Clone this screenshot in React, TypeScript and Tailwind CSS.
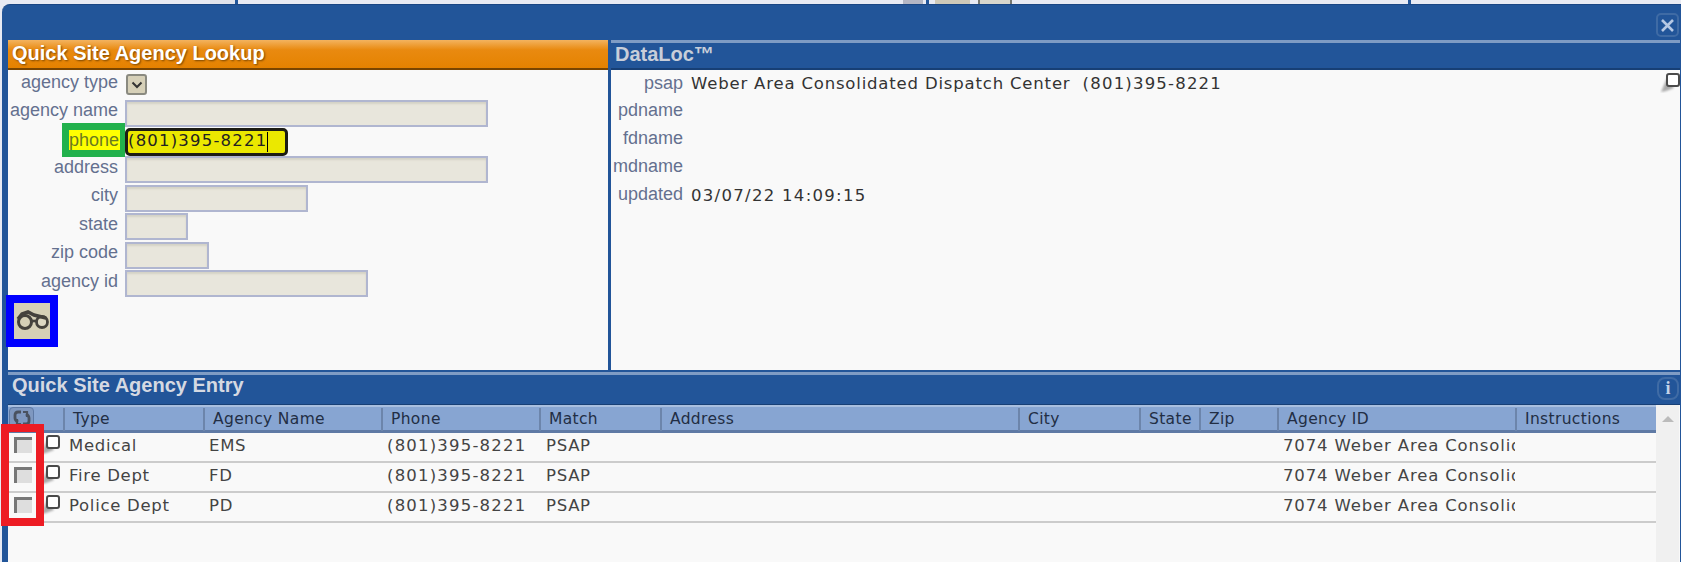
const COLS = "grid grid-cols-[55px_140px_178px_158px_121px_358px_121px_60px_78px_238px_141px]";

const HEADERS = ["Type", "Agency Name", "Phone", "Match", "Address", "City", "State", "Zip", "Agency ID", "Instructions"];

const ROWS = [
  { type: "Medical", name: "EMS" },
  { type: "Fire Dept", name: "FD" },
  { type: "Police Dept", name: "PD" },
];

const FIELDS = [
  { label: "agency name", width: "w-[363px]" },
  { label: "phone", width: "" },
  { label: "address", width: "w-[363px]" },
  { label: "city", width: "w-[183px]" },
  { label: "state", width: "w-[63px]" },
  { label: "zip code", width: "w-[84px]" },
  { label: "agency id", width: "w-[243px]" },
];

const DATALOC = ["pdname", "fdname", "mdname"];

function NoteIcon() {
  return (
    <svg width="20" height="20" viewBox="0 0 20 20" className="block">
      <filter id="note-blur">
        <feGaussianBlur stdDeviation="1.2" />
      </filter>
      <polygon points="7,5 1,19 6,18 14,15" fill="#aaa" filter="url(#note-blur)" />
      <rect x="7" y="1" width="12" height="12" rx="2" fill="#fff" stroke="#4a4a4a" strokeWidth="2" />
    </svg>
  );
}

function Binoculars() {
  return (
    <svg width="36" height="36" viewBox="0 0 36 36" fill="none" stroke="#45423c">
      <circle cx="11" cy="19" r="6.5" strokeWidth="3" fill="#d6d0b6" />
      <circle cx="28" cy="19" r="5.5" strokeWidth="2.8" fill="#ddd8c2" />
      <path d="M4 16 L8 11 L14 9 L20 12 L32 15" strokeWidth="3.6" />
      <path d="M17 18 L23 18" strokeWidth="2.6" />
    </svg>
  );
}

function RefreshIcon() {
  return (
    <svg width="20" height="18" viewBox="0 0 20 18" fill="none" stroke="#4a5260" strokeWidth="2.8">
      <path d="M9 3 H6 C4 3 3 4 3 6 V9 C3 11 4 12 6 13" />
      <path d="M5 10 L5 15 L9 15" strokeWidth="2.2" />
      <path d="M11 15 H14 C16 15 17 14 17 12 V9 C17 7 16 6 14 5" />
      <path d="M15 8 L15 3 L11 3" strokeWidth="2.2" />
    </svg>
  );
}

export default function App() {
  return (
    <div className="relative flex h-[562px] w-[1681px] flex-col overflow-hidden bg-[#e8eaf3] font-['Liberation_Sans',sans-serif]">
      {/* page behind the dialog */}
      <div className="flex h-[4px] shrink-0">
        <div className="ml-[210px] w-[25px] bg-[#e0e2ea]" />
        <div className="w-[3px] bg-[#225599]" />
        <div className="ml-[665px] w-[20px] bg-[#b4b6c4]" />
        <div className="ml-[3px] w-[3px] bg-[#225599]" />
        <div className="ml-[6px] w-[35px] bg-[#cfc9b8]" />
        <div className="ml-[8px] w-[34px] border-x-2 border-[#77776f] bg-[#d8d6cc]" />
        <div className="ml-[396px] w-[3px] bg-[#225599]" />
      </div>

      <div className="ml-[2px] flex min-h-0 flex-1 flex-col rounded-tl-[8px] border-t border-[#1a4684] bg-[#225599] pl-[6px] pr-[1px]">
        {/* title bar */}
        <div className="flex h-[35px] shrink-0 items-end justify-end pb-[3px] pr-[1px]">
          <span className="flex h-[24px] w-[23px] items-center justify-center rounded-[5px] border-2 border-[#3f6ba5]">
            <svg width="15" height="15" viewBox="0 0 15 15" stroke="#b6c8e4" strokeWidth="2.6">
              <path d="M2 2 L13 13 M13 2 L2 13" />
            </svg>
          </span>
        </div>

        {/* section headers */}
        <div className="flex h-[30px] shrink-0">
          <div className="flex w-[600px] items-center border-b-2 border-[#7a4500] bg-[linear-gradient(#f3b35f,#e98a10_35%,#e58200)] pb-[2px] pl-[4px] text-[20px] font-bold text-white [text-shadow:1px_1px_2px_#7a4500]">
            Quick Site Agency Lookup
          </div>
          <div className="ml-[3px] flex flex-1 items-center border-b-2 border-[#173f75] border-t-[3px] border-t-[#7f9cc4] bg-[#225599] pb-[3px] pl-[4px] text-[20px] font-bold text-[#c8ced9]">
            DataLoc™
          </div>
        </div>

        {/* lookup form and DataLoc */}
        <div className="flex h-[300px] shrink-0">
          <div className="w-[600px] bg-[#f9f9f9] text-[18px] text-[#64708f]">
            <div className="flex h-[29px] items-center">
              <span className="w-[110px] pb-[5px] text-right">agency type</span>
              <span className="ml-[8px] flex h-[21px] w-[21px] items-center justify-center rounded-[3px] border-2 border-[#8a8a80] bg-[#d6d0b8]">
                <svg width="12" height="8" viewBox="0 0 12 8" fill="none" stroke="#333" strokeWidth="2">
                  <path d="M1.5 1.5 L6 6 L10.5 1.5" />
                </svg>
              </span>
            </div>
            {FIELDS.map((f) =>
              f.label === "phone" ? (
                <div key={f.label} className="flex h-[28.4px] items-center">
                  <span className="ml-[54px] -my-[3px] flex h-[34px] w-[63px] -translate-y-[2px] items-center border-y-[7px] border-l-[7px] border-r-[5px] border-[#22b14c] bg-[#ffff00] text-[18px] leading-none text-[#6a7a20]">
                    phone
                  </span>
                  <div className="flex h-[28px] w-[163px] items-center rounded-[5px] border-[3px] border-[#1c1c14] bg-[#ebe800] font-['DejaVu_Sans',sans-serif] text-[16.5px] tracking-[1.2px] text-[#222]">
                    (801)395-8221
                    <span className="h-[20px] w-px bg-black" />
                  </div>
                </div>
              ) : (
                <div key={f.label} className="flex h-[28.4px] items-center">
                  <span className="w-[110px] pb-[5px] text-right">{f.label}</span>
                  <span className={`ml-[7px] h-[27px] border-2 border-[#b0b6d0] bg-[#e8e6dc] shadow-[inset_0_2px_2px_#d4d2c6] ${f.width}`} />
                </div>
              )
            )}
            <div className="-ml-[2px] -mt-[3px] w-fit border-8 border-[#0000ff]">
              <button className="flex h-[36px] w-[36px] items-center justify-center bg-[#d6d0b6]">
                <Binoculars />
              </button>
            </div>
          </div>

          <div className="ml-[3px] flex flex-1 bg-[#f9f9f9]">
            <div className="flex-1 text-[18px] text-[#64708f]">
              <div className="flex h-[28.2px] items-center">
                <span className="w-[72px] pb-[1px] text-right">psap</span>
                <span className="ml-[8px] whitespace-pre font-['DejaVu_Sans',sans-serif] text-[16.5px] tracking-[0.82px] text-[#333]">
                  Weber Area Consolidated Dispatch Center{"  "}
                  <span className="tracking-[1.2px]">(801)395-8221</span>
                </span>
              </div>
              {DATALOC.map((label) => (
                <div key={label} className="flex h-[28.2px] items-center">
                  <span className="w-[72px] pb-[4px] text-right">{label}</span>
                </div>
              ))}
              <div className="flex h-[28.2px] items-center">
                <span className="w-[72px] pb-[4px] text-right">updated</span>
                <span className="ml-[8px] font-['DejaVu_Sans',sans-serif] text-[16.5px] tracking-[1.3px] text-[#333]">03/07/22 14:09:15</span>
              </div>
            </div>
            <div className="pt-[3px]">
              <NoteIcon />
            </div>
          </div>
        </div>

        {/* entry section */}
        <div className="mt-[2px] flex h-[32px] shrink-0 items-center justify-between border-t-[3px] border-[#7f9cc4] pb-[3px] pl-[4px] pr-[1px]">
          <span className="-translate-y-[3px] text-[20px] font-bold text-[#d5d9e2]">Quick Site Agency Entry</span>
          <span className="flex h-[23px] w-[22px] items-center justify-center rounded-[8px] border-2 border-[#3f6ba5] font-['Liberation_Serif',serif] text-[18px] font-bold text-[#c4d3e8]">
            i
          </span>
        </div>

        <div className="flex min-h-0 flex-1 border-t border-[#173f75] bg-[#f9f9f9]">
          <div className="w-[1648px]">
            <div className={`${COLS} h-[28px] border-b-[3px] border-t-2 border-b-[#5f7aa5] border-t-[#a9bfdf] bg-[#87a5d2] pb-[2px] font-['DejaVu_Sans',sans-serif] text-[15.5px] tracking-[0.35px] text-[#222e44]`}>
              <div className="flex items-start pl-[1px]">
                <span className="flex h-[21px] w-[25px] items-center justify-center rounded-[4px] border border-[#5f7aa5] bg-[#7f98c0]">
                  <RefreshIcon />
                </span>
              </div>
              {HEADERS.map((h) => (
                <div key={h} className="my-[1px] flex items-center border-l-2 border-[#6c85ab] pl-[8px]">
                  {h}
                </div>
              ))}
            </div>
            {ROWS.map((r) => (
              <div key={r.type} className={`${COLS} h-[30px] border-b-2 border-[#cccccc] pb-[1px] font-['DejaVu_Sans',sans-serif] text-[16.5px] tracking-[0.7px] text-[#444]`}>
                <div className="flex items-start pl-[6px] pt-[3px]">
                  <span className="mt-[1px] h-[16px] w-[18px] border-l-[3px] border-t-[3px] border-[#777] bg-[#dedede]" />
                  <span className="ml-[8px] -mt-[1px]">
                    <NoteIcon />
                  </span>
                </div>
                <div className="flex items-center pl-[6px]">{r.type}</div>
                <div className="flex items-center pl-[6px]">{r.name}</div>
                <div className="flex items-center pl-[6px] tracking-[1.2px]">(801)395-8221</div>
                <div className="flex items-center pl-[7px]">PSAP</div>
                <div />
                <div />
                <div />
                <div />
                <div className="flex items-center overflow-hidden whitespace-nowrap pl-[6px] tracking-[0.85px]">7074 Weber Area Consolidated Dispatch Center</div>
                <div />
              </div>
            ))}
          </div>
          <div className="flex w-[23px] justify-center bg-[#f0f0f0] pt-[11px]">
            <span className="h-0 w-0 border-x-[6px] border-b-[6px] border-x-transparent border-b-[#bbb]" />
          </div>
        </div>
      </div>

      {/* red annotation over the checkbox column */}
      <div className="pointer-events-none absolute left-[1px] top-[424px] h-[102px] w-[43px] border-8 border-[#ed1c24]" />
    </div>
  );
}
